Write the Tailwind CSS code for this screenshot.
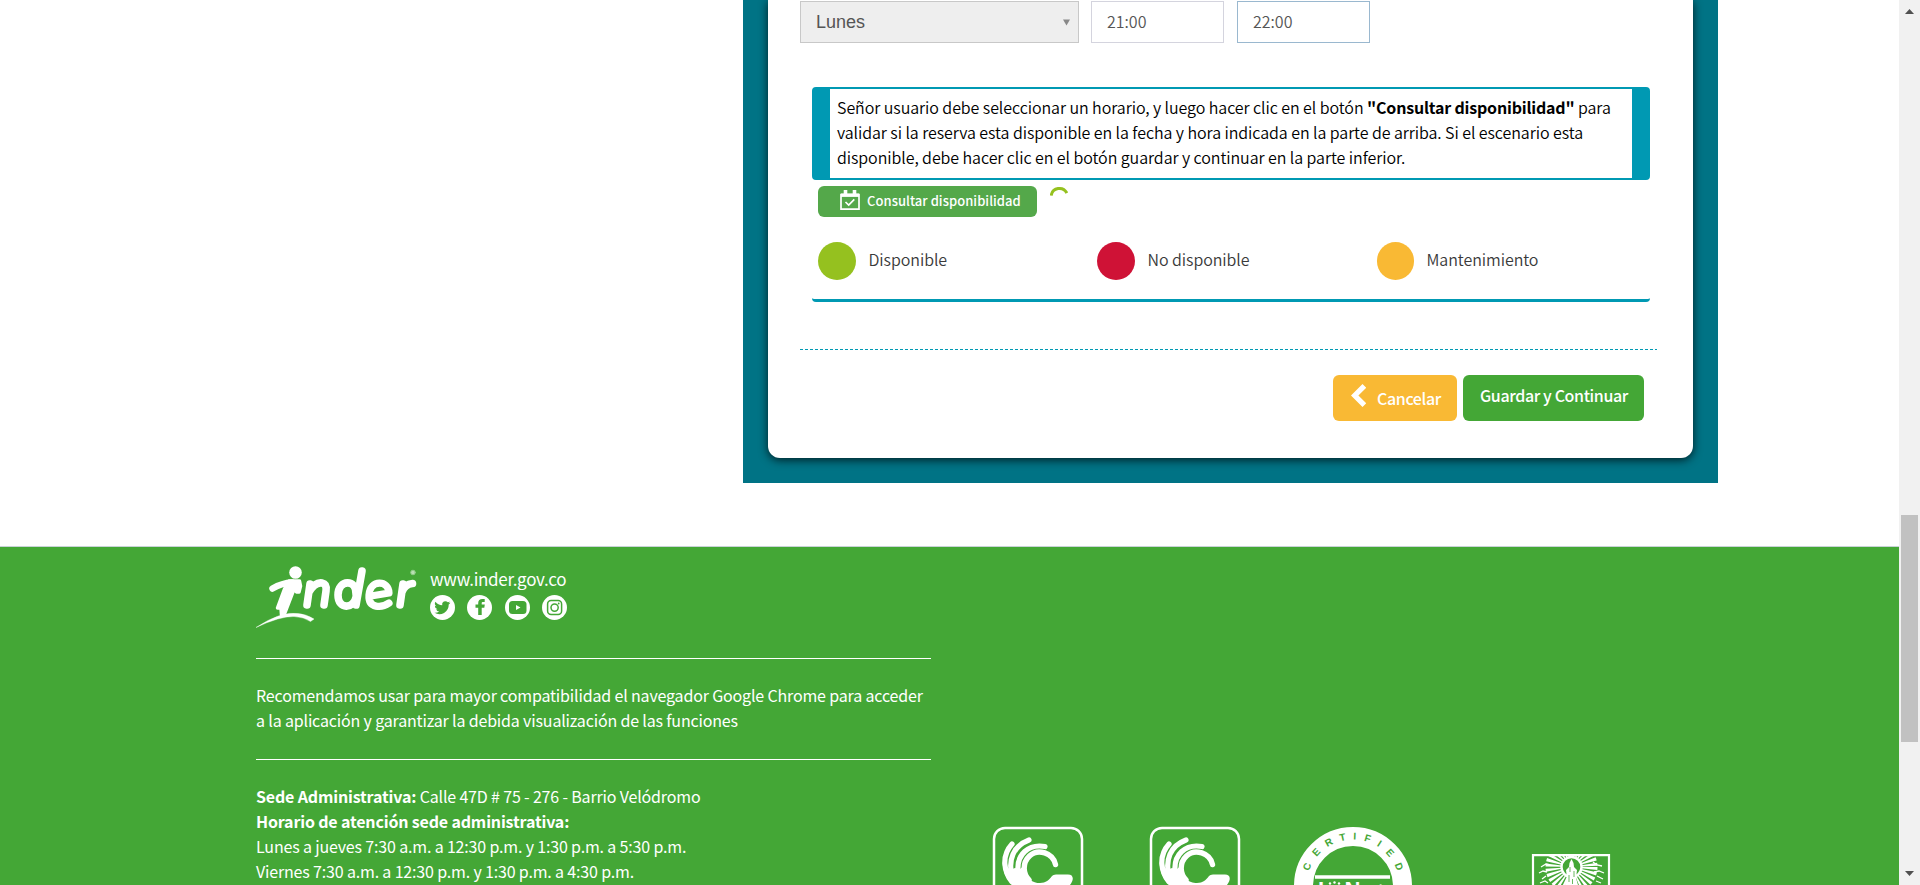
<!DOCTYPE html>
<html lang="es">
<head>
<meta charset="utf-8">
<title>Inder - Reserva</title>
<script src="https://cdn.jsdelivr.net/npm/@tailwindcss/browser@4"></script>
</head>
<body class="h-[885px] w-[1920px] overflow-hidden bg-white font-['Noto_Sans_CJK_SC',sans-serif] text-black">
<div class="flex h-[885px]">
  <div class="flex w-[1899px] flex-col">
    <main class="ml-[743px] h-[483px] w-[975px] shrink-0 bg-[#007385] px-[25px]">
      <div class="h-[458px] rounded-b-[12px] bg-white pl-8 pr-9 pt-px shadow-[0_2px_10px_rgba(0,0,0,0.75)]">
        <div class="flex h-[42px] text-[#555]">
          <div class="flex w-[279px] items-center justify-between border border-[#c8c8c8] bg-[#eee] pl-[15px] pr-2 font-['Liberation_Sans',sans-serif] text-[18px]"><span>Lunes</span>
            <svg class="h-[7px] w-[7px]" viewBox="0 0 7 7"><path d="M0 .5h7L3.500 6.500z" fill="#888"/></svg></div>
          <div class="ml-3 flex w-[133px] items-center border border-[#d4d4de] pb-[2px] pl-[15px] text-[16px] font-[350]"><span>21:00</span></div>
          <div class="ml-[13px] flex w-[133px] items-center border border-[#9ab8cf] pb-[2px] pl-[15px] text-[16px] font-[350]"><span>22:00</span></div>
        </div>
        <div class="ml-3 mt-[44px] h-[93px] w-[838px] rounded-[4px] border-x-[18px] border-y-2 border-[#0099b3] pl-[7px] pt-[6px] text-[16px] font-[350] leading-[25px] tracking-[-0.07px] whitespace-nowrap">
          <p>Señor usuario debe seleccionar un horario, y luego hacer clic en el botón <b class="font-bold tracking-[-0.19px]">"Consultar disponibilidad"</b> para</p>
          <p>validar si la reserva esta disponible en la fecha y hora indicada en la parte de arriba. Si el escenario esta</p>
          <p>disponible, debe hacer clic en el botón guardar y continuar en la parte inferior.</p>
        </div>
        <div class="ml-[18px] mt-[6px] flex h-[31px]">
          <div class="flex w-[219px] items-center rounded-[6px] bg-[#54a84a] pl-[22px] text-[13px] font-medium tracking-[0.04px] whitespace-nowrap text-white">
            <svg class="mr-[7px] -mt-[3px] h-5 w-5" viewBox="0 0 20 20" fill="none" stroke="#fff" stroke-width="1.700"><path d="M1 4.500h18v14.600H1z"/><path d="M1 5.200h18" stroke-width="3.400"/><path d="M5.500 0v5M14.500 0v5" stroke-width="3.600"/><path d="M5.500 12l3.200 3 5.600-5.600"/></svg>
            <span class="-mt-px">Consultar disponibilidad</span>
          </div>
          <svg class="ml-[13px] h-[10px] w-[18px]" viewBox="0 0 18 10"><path d="M1.200 9.600A8.300 8.300 0 0 1 16.800 7" fill="none" stroke="#95c11f" stroke-width="3"/></svg>
        </div>
        <div class="ml-3 mt-[25px] flex h-[60px] w-[838px] rounded-b-[4px] border-b-[3px] border-[#0099b3] pl-[6px] text-[16px] font-[350] text-[#3a3a3a] tracking-[-0.06px]">
          <div class="flex h-[38px] w-[279px] items-center gap-[12.5px]"><i class="size-[38px] rounded-full bg-[#95c11f]"></i><span class="-mt-1">Disponible</span></div>
          <div class="flex h-[38px] w-[280px] items-center gap-[12.5px]"><i class="size-[38px] rounded-full bg-[#cf1236]"></i><span class="-mt-1">No disponible</span></div>
          <div class="flex h-[38px] items-center gap-[12.5px]"><i class="h-[38px] w-[37px] rounded-full bg-[#f9b934]"></i><span class="-mt-1">Mantenimiento</span></div>
        </div>
        <svg class="mt-[47px] block h-px w-[857px]"><path d="M0 .5h857" stroke="#0099b3" stroke-dasharray="3 2"/></svg>
        <div class="mt-[25px] flex justify-end gap-[6px] pr-[13px] text-[16px] font-medium tracking-[-0.38px] text-white">
          <div class="flex h-[46px] w-[124px] rounded-[6px] bg-[#f9b934] pl-[18px]">
            <svg class="mr-[11px] mt-[9px] h-[23px] w-[15px]" viewBox="0 0 15 23"><path d="M11.500 0L0 11.500 11.500 23l3.700-3.700-7.800-7.800 7.800-7.800z" fill="#fff"/></svg>
            <span class="leading-[46px]">Cancelar</span></div>
          <div class="h-[46px] w-[181px] rounded-[6px] bg-[#44a736] pl-[17px] leading-[40px]">Guardar y Continuar</div>
        </div>
      </div>
    </main>
    <footer class="mt-[63px] flex h-[339px] shrink-0 items-start overflow-hidden border-t border-[#c9d3d6] bg-[#44a736] pl-[256px] text-white">
      <div class="w-[675px] text-[16px] leading-[25px] tracking-[-0.165px] whitespace-nowrap">
        <div class="flex h-[111px] pt-[18px]">
          <svg class="h-[64px] w-[162px]" viewBox="0 0 162 64" fill="none" stroke="#fff" stroke-linecap="round" stroke-linejoin="round">
            <circle cx="39.500" cy="7.500" r="6.300" fill="#fff" stroke="none"/>
            <path d="M16.500 23.500Q26 18 36 17.500" stroke-width="6.500"/>
            <path d="M33 16L43.500 16L44.500 21L43 27L40.500 27L38 24L28 50L25.500 50L25 43L21.500 43L28.500 24z" fill="#fff" stroke-width="3.500"/>
            <path d="M54 19L51 40M53 27Q59 17 66 18Q71 19 70 26L68 40" stroke-width="7.600"/>
            <path d="M106 6L100 40M100 29C101 14 82 14 82 30C82 45 98 44 100 32" stroke-width="7.600"/>
            <path d="M115 31L133 28C133 15 114 14 113 30C112 44 126 43 133 38" stroke-width="7.200"/>
            <path d="M147 19L144 40M146 27Q149 19 156.500 18.500" stroke-width="7.600"/>
            <circle cx="157" cy="7.500" r="2.300" fill="#b9dfb3" stroke="#93cc8a" stroke-width="1"/>
            <path d="M0 62.500Q25 46 42 48.500Q50 49 58 54L54.500 56.500Q48 52 38 51.500Q24 51 0 62.500z" fill="#fff" stroke-width=".4"/>
          </svg>
          <div class="ml-3 pt-px">
            <div class="h-[29px] text-[17px] tracking-[-0.3px]">www.inder.gov.co</div>
            <div class="flex">
              <svg class="size-[25px]" viewBox="0 0 25 25"><circle cx="12.500" cy="12.500" r="12.500" fill="#fff"/><path transform="translate(4.500 4.500) scale(.67)" fill="#44a736" d="M23.600 4.900a9 9 0 0 1-2.800.8 4.900 4.900 0 0 0 2.200-2.700 9.900 9.900 0 0 1-3.100 1.200 4.900 4.900 0 0 0-8.400 4.500A14 14 0 0 1 1.400 3.500a4.900 4.900 0 0 0 1.500 6.600 5 5 0 0 1-2.200-.6 4.900 4.900 0 0 0 3.900 4.900 5 5 0 0 1-2.200.1 4.900 4.900 0 0 0 4.600 3.400A9.900 9.900 0 0 1 0 19.900a14 14 0 0 0 21.200-12.400 10 10 0 0 0 2.400-2.600z"/></svg>
              <svg class="ml-3 size-[25px]" viewBox="0 0 25 25"><circle cx="12.500" cy="12.500" r="12.500" fill="#fff"/><path fill="#44a736" d="M11.200 20v-7.200H8.500V9.600h2.700V8c0-2.700 1.600-4 4-4h2.500v3h-1.500c-1.200 0-1.500.5-1.500 1.300v1.300h3.100l-.5 3.200h-2.600V20z"/></svg>
              <svg class="ml-[13px] size-[25px]" viewBox="0 0 25 25"><circle cx="12.500" cy="12.500" r="12.500" fill="#fff"/><rect x="4" y="6" width="17.500" height="13" rx="3.500" fill="#44a736"/><path d="M11 10l4.500 2.500L11 15z" fill="#fff"/></svg>
              <svg class="ml-3 size-[25px]" viewBox="0 0 25 25" fill="none" stroke="#44a736" stroke-width="1.500"><circle cx="12.500" cy="12.500" r="12.500" fill="#fff" stroke="none"/><rect x="5.600" y="5.600" width="14" height="14" rx="3.500"/><circle cx="12.600" cy="12.600" r="3.600"/><circle cx="16.700" cy="8.500" r=".9" fill="#44a736" stroke="none"/></svg>
            </div>
          </div>
        </div>
        <div class="h-[101px] border-t border-white pt-6">
          <p>Recomendamos usar para mayor compatibilidad el navegador Google Chrome para acceder</p>
          <p>a la aplicación y garantizar la debida visualización de las funciones</p>
        </div>
        <div class="border-t border-white pt-6">
          <p><b class="font-bold">Sede Administrativa:</b> Calle 47D # 75 - 276 - Barrio Velódromo</p>
          <p class="font-bold">Horario de atención sede administrativa:</p>
          <p>Lunes a jueves 7:30 a.m. a 12:30 p.m. y 1:30 p.m. a 5:30 p.m.</p>
          <p>Viernes 7:30 a.m. a 12:30 p.m. y 1:30 p.m. a 4:30 p.m.</p>
        </div>
      </div>
      <svg class="ml-[61px] mt-[279px] h-[59px] w-[92px]" viewBox="0 0 92 59" fill="none" stroke="#fff"><g id="hand"><rect x="2" y="2" width="88" height="90" rx="11" stroke-width="2.500"/><path stroke-width="5.200" stroke-linecap="round" d="M20 18C9 30 12 46 20 56M37 14C21 20 16 34 20 50M53 20.500C36 17.500 25 29 26 44"/><path stroke-width="5.400" stroke-linecap="round" d="M63.500 38.500C61 27 46 22 37.500 30C30 37 31 48 37 54"/><path fill="#fff" stroke="none" d="M10.500 36L14 42L18 44L23 42L28 43L34 38C32 52 40 57 48 57C54 57 57 54 60 50Q61 48.500 64 48.500H76C82 48.500 82 54 78 59H20C14 52 11 46 10.500 36z"/></g></svg>
      <svg class="ml-[65px] mt-[279px] h-[59px] w-[92px]" viewBox="0 0 92 59" fill="none" stroke="#fff"><use href="#hand"/></svg>
      <svg class="ml-[52px] mt-[279px] h-[59px] w-[120px] font-['Liberation_Sans',sans-serif] text-[10px] font-bold" viewBox="0 0 120 59" text-anchor="middle" fill="#44a736">
        <circle cx="60" cy="60" r="49.500" fill="none" stroke="#fff" stroke-width="19"/>
        <text transform="rotate(-67 60 60)" x="60" y="13.500">C</text>
        <text transform="rotate(-47.500 60 60)" x="60" y="13.500">E</text>
        <text transform="rotate(-29 60 60)" x="60" y="13.500">R</text>
        <text transform="rotate(-12 60 60)" x="60" y="13.500">T</text>
        <text transform="rotate(2 60 60)" x="60" y="13.500">I</text>
        <text transform="rotate(17 60 60)" x="60" y="13.500">F</text>
        <text transform="rotate(32 60 60)" x="60" y="13.500">I</text>
        <text transform="rotate(48 60 60)" x="60" y="13.500">E</text>
        <text transform="rotate(67 60 60)" x="60" y="13.500">D</text>
        <path d="M22 51h75" stroke="#fff" stroke-width="3.600"/>
        <g fill="#fff"><text class="text-[22px]" x="28" y="70.500">I</text><text class="text-[22px]" x="59.500" y="70.500">N</text><text class="text-[20px]" x="87.500" y="72">t</text><circle cx="37" cy="57.500" r="1.200"/><circle cx="41.500" cy="56.500" r="1.200"/><circle cx="46" cy="57.500" r="1.200"/></g>
      </svg>
      <svg class="ml-[118px] mt-[306px] h-[32px] w-[80px]" viewBox="0 0 80 32" fill="none" stroke="#fff">
        <path d="M2 34V2.200h76V34" stroke-width="2.200"/>
        <svg x="3" y="3" width="73" height="29" viewBox="3 3 73 29">
          <circle cx="40.500" cy="14" r="18" stroke-width="16" stroke-dasharray="2.200 1.570"/>
          <circle cx="40.500" cy="14" r="10" stroke-width="2.400"/>
          <path d="M40.500 6l2 4 .5 4 3 3-1 8 2 7H34l2-7-1-8 3-3 .5-4z" fill="#fff" stroke="none"/>
          <path d="M39 14v5M43 18v6M38 22v7M41.500 26v5" stroke="#44a736" stroke-width=".8"/>
          <path d="M10 14l5-3 4 1M8 20l4-2 4 1M11 26l4-3M9 30l5-2 3 2M71 13l-5-1-4-3M73 20l-5-2-5 1M72 26l-6-3M70 30l-5-2" stroke-width="1.300"/>
        </svg>
      </svg>
    </footer>
  </div>
  <div class="flex w-[21px] flex-col items-center bg-[#f1f1f1]">
    <svg class="mt-[9px] h-[5px] w-[9px]" viewBox="0 0 9 5"><path d="M0 5L4.500 0 9 5z" fill="#505050"/></svg>
    <div class="mt-[501px] h-[227px] w-[17px] bg-[#c1c1c1]"></div>
    <svg class="mt-[129px] h-[5px] w-[9px]" viewBox="0 0 9 5"><path d="M0 0h9L4.500 5z" fill="#505050"/></svg>
  </div>
</div>
</body>
</html>
